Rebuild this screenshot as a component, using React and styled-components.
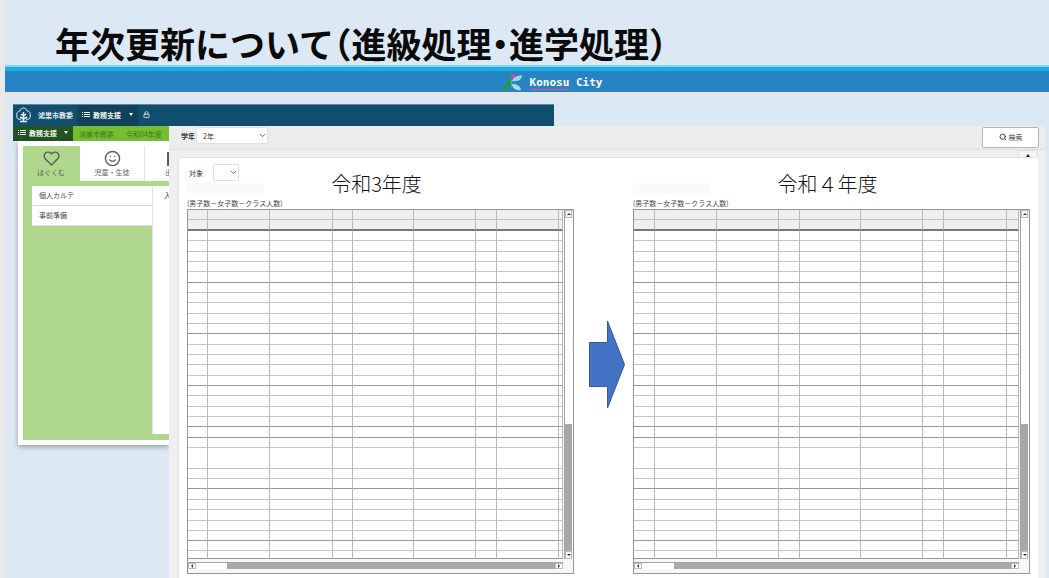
import { styled, createGlobalStyle } from 'styled-components';
import { FiChevronDown, FiHeart, FiSmile, FiLock, FiSearch } from 'react-icons/fi';

const GlobalStyle = createGlobalStyle`
    * {
        box-sizing: border-box;
    }
    body {
        margin: 0;
        font-family: "Noto Sans CJK JP", sans-serif;
        font-size: 7px;
        line-height: 10px;
        color: #444;
    }
    h1, h2, p {
        margin: 0;
    }
    button, select {
        font: inherit;
        color: inherit;
    }
    svg {
        display: block;
        flex: none;
    }
`

const Slide = styled.div`
    display: flex;
    flex-direction: column;
    min-height: 100vh;
    border-left: 5px solid #e9e9e9;
    background: #dce9f5;
`
const Title = styled.h1`
    height: 65px;
    padding: 19px 0 0 50px;
    font-size: 35px;
    line-height: 48px;
    font-weight: 700;
    font-feature-settings: "halt";
    white-space: nowrap;
    color: #0a0a0a;
`
const Banner = styled.div`
    display: flex;
    align-items: center;
    justify-content: center;
    gap: 8px;
    height: 31px;
    padding: 5px 0 0 52px;
    border-top: 2px solid #86d3ee;
    border-bottom: 4px solid #e5e5e5;
    background: linear-gradient(#1caee4 4px, #2683c6 4px);
`
const CityName = styled.span`
    padding: 2px 2px 0 0;
    font-family: "DejaVu Sans Mono", monospace;
    font-size: 11px;
    line-height: 12px;
    font-weight: 700;
    color: #fff;

    u {
        display: inline-block;
        border-bottom: 1px solid #d8597c;
        text-decoration: none;
    }
`

const NavBar = styled.nav`
    display: flex;
    align-items: stretch;
    width: 52%;
    max-width: 541px;
    height: 22px;
    margin: 8px 0 0 8px;
    border-top: 1px solid #6b8495;
    background: #124e6d;
    color: #e3edf2;
`
const NavBrand = styled.div`
    display: flex;
    align-items: center;
    gap: 7px;
    width: 64px;
    padding: 0 0 2px 3px;
    font-weight: 700;
    white-space: nowrap;
`
const NavMenu = styled.button`
    display: flex;
    align-items: center;
    gap: 3px;
    width: ${({ $width }) => $width};
    padding: 0 5px 2px;
    border: 0;
    background: ${({ $bg }) => $bg};
    color: #f2f7f2;
    font-weight: 700;
    white-space: nowrap;
`
const Caret = styled.span`
    margin-left: auto;
    border: 2px solid transparent;
    border-top: 3px solid #fff;
    border-bottom: 0;
`
const NavLock = styled.button`
    display: flex;
    align-items: center;
    padding: 0 5px 2px;
    border: 0;
    background: none;
    color: #d5e3ea;
`

const Main = styled.div`
    display: flex;
    flex: 1;
    padding: 0 4px 0 8px;
`
const Sidebar = styled.aside`
    flex: none;
    width: 156px;
    overflow: hidden;
`
const SubBar = styled.div`
    display: flex;
    align-items: center;
    gap: 12px;
    height: 15px;
    background: #76bd31;
    color: #3f7a1c;
    white-space: nowrap;

    button {
        align-self: stretch;
        margin-right: -6px;
    }
`
const SideCard = styled.div`
    height: 304px;
    margin-left: 5px;
    padding: 5px 0 5px 5px;
    background: #fff;
    box-shadow: 0 2px 5px #9a9a9a;
`
const SideBody = styled.div`
    display: flex;
    flex-direction: column;
    height: 100%;
    background: #b0d88c;
`
const Tabs = styled.div`
    display: flex;
    height: 35px;
`
const Tab = styled.button`
    display: flex;
    flex: none;
    flex-direction: column;
    align-items: ${({ $cut }) => ($cut ? 'flex-start' : 'center')};
    width: ${({ $width }) => $width};
    padding: 4px 0 0 ${({ $cut }) => ($cut ? '20px' : '0')};
    border: 0;
    border-right: 1px solid ${({ $active }) => ($active ? '#b0d88c' : '#e4e4e4')};
    background: ${({ $active }) => ($active ? '#b0d88c' : '#fff')};
    color: #5d5d5d;
    white-space: nowrap;
`
const Menu = styled.div`
    display: grid;
    flex: 1;
    grid-template-columns: 120px 1fr;
    grid-template-rows: 20px 20px 1fr;
    margin: 5px 0 6px 9px;
`
const MenuItem = styled.a`
    padding: 4px 7px;
    border-bottom: 1px solid #dcdcdc;
    background: #fff;
    color: inherit;
    text-decoration: none;
`
const MenuSide = styled.div`
    grid-column: 2;
    grid-row: 1 / 4;
    overflow: hidden;
    padding: 4px 0 0 11px;
    border-left: 1px solid #e2e2e2;
    background: #fff;
`

const Panel = styled.main`
    display: flex;
    flex: 1;
    flex-direction: column;
    min-width: 0;
    background: #efefef;
`
const Toolbar = styled.div`
    display: flex;
    align-items: flex-start;
    height: 24px;
    padding: 1px 6px 0 12px;
    border-bottom: 1px solid #dedede;
    background: #ececec;
`
const Field = styled.label`
    display: flex;
    align-items: center;
    gap: ${({ $gap }) => $gap};
    font-weight: ${({ $bold }) => ($bold ? 700 : 400)};
    color: #333;
`
const SelectBox = styled.span`
    display: grid;
    align-items: center;
    width: ${({ $width }) => $width};

    select, svg {
        grid-area: 1 / 1;
    }
    select {
        width: 100%;
        height: 17px;
        padding: 0 6px;
        appearance: none;
        border: 1px solid #e0e0e0;
        border-radius: 1px;
        background: #fff;
        font-weight: 400;
    }
    svg {
        justify-self: end;
        margin-right: 1px;
        pointer-events: none;
    }
`
const SearchButton = styled.button`
    display: flex;
    align-items: center;
    justify-content: center;
    gap: 2px;
    width: 57px;
    height: 21px;
    margin-left: auto;
    padding: 0 0 2px;
    border: 1px solid #b5b5b5;
    border-radius: 2px;
    background: #fff;
`
const Strip = styled.div`
    display: flex;
    justify-content: flex-end;
    height: 7px;
    padding-right: 7px;
`
const Collapse = styled.button`
    display: flex;
    align-items: flex-end;
    justify-content: center;
    width: 20px;
    padding: 0;
    border: 1px solid #e0e0e0;
    border-bottom: 0;
    background: #f3f3f3;

    span {
        border: 2px solid transparent;
        border-bottom: 3px solid #222;
        border-top: 0;
    }
`
const Sheet = styled.section`
    display: grid;
    flex: 1;
    grid-template-columns: 387fr 59px 397fr;
    margin: 0 7px 0 9px;
    padding: 6px 8px 4px 8px;
    border: 1px solid #dfe4ea;
    border-width: 1px 0 0 1px;
    background: #fff;
`
const Year = styled.div`
    display: flex;
    flex-direction: column;
    min-width: 0;
`
const YearTop = styled.div`
    height: 19px;
    padding-left: 2px;
`
const YearHead = styled.div`
    display: grid;
    grid-template-columns: 77px 1fr 85px;
    align-items: start;
    height: 15px;
`
const Blank = styled.div`
    height: 11px;
    background: #fafafa;
`
const YearName = styled.h2`
    margin-top: -13px;
    font-size: 20px;
    line-height: 28px;
    font-weight: 300;
    text-align: center;
    white-space: nowrap;
    color: #111;
`
const Note = styled.p`
    height: 11px;
    white-space: nowrap;
`
const Frame = styled.div`
    display: grid;
    grid-template-columns: 1fr 10px;
    grid-template-rows: 349px 14px;
    border: 1px solid #969696;
    background: #f7f7f7;
`
const Grid = styled.table`
    align-self: start;
    width: 100%;
    table-layout: fixed;
    border-spacing: 0;
    background: #fff;

    th, td {
        padding: 0;
        border-right: 1px solid #b9b9b9;
        border-bottom: 1px solid #bdbdbd;
    }
    th {
        height: 10px;
        background: #efefef;
    }
    thead tr:last-child th {
        height: 11px;
        border-bottom: 2px solid #777;
    }
`
const Row = styled.tr`
    td {
        height: ${({ $height }) => $height}px;
        border-bottom-color: ${({ $strong }) => ($strong ? '#999' : '#c4c4c4')};
    }
`
const ScrollTrack = styled.div`
    display: flex;
    flex-direction: ${({ $across }) => ($across ? 'row' : 'column')};
    margin: ${({ $across }) => ($across ? '3px 0 4px' : '0 1px')};
    border: 1px solid #a2a2a2;
    border-width: ${({ $across }) => ($across ? '1px 0 0 0' : '0 0 0 1px')};
    background: #fff;
`
const ScrollThumb = styled.div`
    flex: ${({ $size }) => $size};
    background: #a9a9a9;
`
const ScrollGap = styled.div`
    flex: ${({ $size }) => $size};
`
const ScrollButton = styled.button`
    display: flex;
    flex: none;
    align-items: center;
    justify-content: center;
    width: ${({ $across }) => ($across ? '8px' : '7px')};
    height: ${({ $across }) => ($across ? '6px' : '8px')};
    padding: 0;
    border: 1px solid #bbb;
    background: #fff;
    color: #333;
`
const ArrowCell = styled.div`
    padding: 156px 8px 0 15px;

    svg {
        width: 100%;
        height: 89px;
    }
`

const rows = [
    10, 11, 10, 10, 11, 10, 10, 11, 10, 10, 11, 10, 10, 11, 10, 10, 11, 10, 10, 11, 10,
    21, 10, 10, 11, 10, 11, 10, 10, 10, 8,
]
const strongRows = [4, 9, 14, 18, 19, 23, 28, 30]

const Tip = ({ d }) => <svg width="4" height="4" viewBox="0 0 4 4"><path d={d} fill="currentColor" /></svg>

const ListIcon = () => (
    <svg width="8" height="7" viewBox="0 0 8 7">
        <path d="M0 1H1V2H0ZM2 1H8V2H2ZM0 3H1V4H0ZM2 3H8V4H2ZM0 5H1V6H0ZM2 5H8V6H2Z" fill="currentColor" />
    </svg>
)

const CityLogo = () => (
    <svg width="20" height="17" viewBox="0 0 20 17">
        <path d="M9 3C10 6 9 11 6 14C4 17 1 17 0 16C0 12 4 13 5 9C5 7 6 4 9 3Z" fill="#27964a" />
        <path d="M20 1C20 5 17 8 10 7C11 3 15 2 20 1Z" fill="#9ad9d6" />
        <path d="M10 10C14 10 18 11 19 16C14 17 10 14 10 10Z" fill="#a7dcdb" />
        <path d="M8 5C10 6 10 10 9 13" fill="none" stroke="#5ab7a2" />
        <circle cx="11" cy="2" r="2" fill="#d94b9c" />
    </svg>
)

const TreeLogo = () => (
    <svg width="15" height="16" viewBox="0 0 15 16" fill="none" stroke="#e6eff3">
        <path d="M5 12C2 13 0 11 1 8C0 6 2 4 4 4C4 2 6 1 7.500 1C9 1 11 2 11 4C13 4 15 6 14 8C15 11 13 13 10 12" />
        <path d="M4 14.500H11M7.500 14V5M7.500 9L5 7M7.500 9L10 7M7.500 12L4 10M7.500 12L11 10" strokeWidth="1.500" />
    </svg>
)

const Select = ({ label, value, width, gap, bold }) => (
    <Field $gap={gap} $bold={bold}>
        {label}
        <SelectBox $width={width}>
            <select defaultValue={value}><option>{value}</option></select>
            <FiChevronDown size={9} />
        </SelectBox>
    </Field>
)

const ClassGrid = ({ columns }) => (
    <Frame>
        <Grid>
            <colgroup>
                {columns.map((width, i) => <col key={i} width={width} />)}
                <col />
            </colgroup>
            <thead>
                {[0, 1].map((i) => (
                    <tr key={i}>{[...columns, 0].map((_, j) => <th key={j} />)}</tr>
                ))}
            </thead>
            <tbody>
                {rows.map((height, i) => (
                    <Row key={i} $height={height} $strong={strongRows.includes(i)}>
                        {[...columns, 0].map((_, j) => <td key={j} />)}
                    </Row>
                ))}
            </tbody>
        </Grid>
        <ScrollTrack>
            <ScrollButton aria-label="上へ"><Tip d="M0 3L2 1L4 3Z" /></ScrollButton>
            <ScrollGap $size={205} />
            <ScrollThumb $size={127} />
            <ScrollButton aria-label="下へ"><Tip d="M0 1L2 3L4 1Z" /></ScrollButton>
        </ScrollTrack>
        <ScrollTrack $across>
            <ScrollButton $across aria-label="左へ"><Tip d="M3 0L1 2L3 4Z" /></ScrollButton>
            <ScrollGap $size={31} />
            <ScrollThumb $size={328} />
            <ScrollButton $across aria-label="右へ"><Tip d="M1 0L3 2L1 4Z" /></ScrollButton>
        </ScrollTrack>
    </Frame>
)

const ClassYear = ({ name, columns, children }) => (
    <Year>
        <YearTop>{children}</YearTop>
        <YearHead>
            <Blank />
            <YearName>{name}</YearName>
        </YearHead>
        <Note>(男子数－女子数－クラス人数)</Note>
        <ClassGrid columns={columns} />
    </Year>
)

export default function App() {
    return (
        <Slide>
            <GlobalStyle />
            <Title>年次更新について（進級処理・進学処理）</Title>
            <Banner>
                <CityLogo />
                <CityName><u>Konosu</u> City</CityName>
            </Banner>
            <NavBar>
                <NavBrand><TreeLogo />鴻巣市教委</NavBrand>
                <NavMenu $width="61px" $bg="#12425b"><ListIcon />教務支援<Caret /></NavMenu>
                <NavLock aria-label="ロック"><FiLock size={7} strokeWidth={3} /></NavLock>
            </NavBar>
            <Main>
                <Sidebar>
                    <SubBar>
                        <NavMenu $width="60px" $bg="#23511f"><ListIcon />教務支援<Caret /></NavMenu>
                        <span>鴻巣市教委</span>
                        <span>令和04年度</span>
                    </SubBar>
                    <SideCard>
                        <SideBody>
                            <Tabs>
                                <Tab $width="57px" $active><FiHeart size={17} strokeWidth={2} />はぐくむ</Tab>
                                <Tab $width="65px"><FiSmile size={17} strokeWidth={2} />児童・生徒</Tab>
                                <Tab $width="65px" $cut>
                                    <svg width="15" height="17" viewBox="0 0 15 17"><path d="M3 3H14V15H3Z" fill="none" stroke="#5d5d5d" strokeWidth="2" /></svg>
                                    出
                                </Tab>
                            </Tabs>
                            <Menu>
                                <MenuItem href="#karte">個人カルテ</MenuItem>
                                <MenuItem href="#junbi">事前準備</MenuItem>
                                <MenuSide>入</MenuSide>
                            </Menu>
                        </SideBody>
                    </SideCard>
                </Sidebar>
                <Panel>
                    <Toolbar>
                        <Select label="学年" value="2年" width="72px" gap="1px" bold />
                        <SearchButton><FiSearch size={8} strokeWidth={3} />検索</SearchButton>
                    </Toolbar>
                    <Strip>
                        <Collapse aria-label="閉じる"><span /></Collapse>
                    </Strip>
                    <Sheet>
                        <ClassYear name="令和3年度" columns={[20, 62, 63, 20, 61, 62, 21, 62]}>
                            <Select label="対象" value="" width="26px" gap="10px" />
                        </ClassYear>
                        <ArrowCell>
                            <svg viewBox="0 0 36 89" preserveAspectRatio="none">
                                <path d="M0.500 22.500H18.500V1L35.500 44.500L18.500 88V66.500H0.500Z" fill="#4472c4" stroke="#35589a" />
                            </svg>
                        </ArrowCell>
                        <ClassYear name="令和４年度" columns={[21, 62, 62, 21, 61, 62, 21, 63]} />
                    </Sheet>
                </Panel>
            </Main>
        </Slide>
    )
}
